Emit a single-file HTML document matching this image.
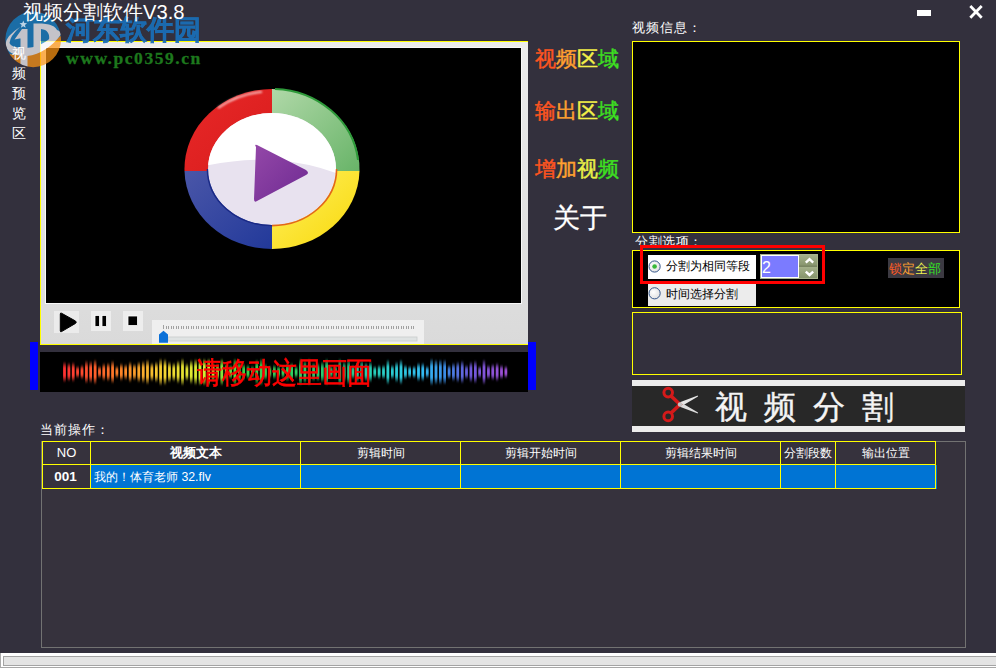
<!DOCTYPE html>
<html><head><meta charset="utf-8">
<style>
*{margin:0;padding:0;box-sizing:border-box}
html,body{width:996px;height:668px;overflow:hidden}
body{background:#33303d;font-family:"Liberation Sans",sans-serif;position:relative;color:#fff}
.a{position:absolute}
.t{position:absolute;white-space:nowrap;line-height:1}
</style></head><body>

<!-- title -->

<!-- window buttons -->
<div class="a" style="left:917px;top:10px;width:14px;height:6px;background:#fff"></div>
<svg class="a" style="left:965.5px;top:1.5px" width="20" height="20" viewBox="0 0 20 20"><path d="M4.3 4 L15.7 15.8 M15.7 4 L4.3 15.8" stroke="#fff" stroke-width="2.8"/></svg>

<!-- player frame -->
<div class="a" id="player" style="left:40px;top:41px;width:488px;height:304px;background:linear-gradient(#ececec,#dadada);border-top:1px solid #ff0;border-left:1px solid #ff0;border-bottom:1px solid #ff0"></div>
<div class="a" style="left:45px;top:47px;width:477px;height:257px;background:#f8f8f8"></div>
<div class="a" id="video" style="left:46px;top:48px;width:475px;height:255px;background:#000"></div>
<svg class="a" style="left:0;top:0" width="996" height="400" viewBox="0 0 996 400">
 <defs>
  <linearGradient id="gG" x1="0" y1="0" x2="1" y2="1"><stop offset="0" stop-color="#b0d8a8"/><stop offset="1" stop-color="#68b468"/></linearGradient>
  <linearGradient id="gR" x1="0" y1="0" x2="1" y2="1"><stop offset="0" stop-color="#e82828"/><stop offset="1" stop-color="#d81c1c"/></linearGradient>
  <linearGradient id="gB" x1="0" y1="0" x2="1" y2="1"><stop offset="0" stop-color="#4a56a8"/><stop offset="1" stop-color="#22399a"/></linearGradient>
  <linearGradient id="gY" x1="0" y1="0" x2="1" y2="1"><stop offset="0" stop-color="#fff060"/><stop offset="1" stop-color="#f8d808"/></linearGradient>
  <linearGradient id="gW" x1="0" y1="0" x2="0" y2="1"><stop offset="0" stop-color="#ffffff"/><stop offset="0.45" stop-color="#fbfafd"/><stop offset="0.5" stop-color="#e8e2f0"/><stop offset="1" stop-color="#e4dcec"/></linearGradient>
  <linearGradient id="gP" x1="0" y1="0" x2="1" y2="1"><stop offset="0" stop-color="#9448a8"/><stop offset="1" stop-color="#6e2a92"/></linearGradient>
  <filter id="hl"><feGaussianBlur stdDeviation="0.8"/></filter>
  <filter id="bl" x="-50%" y="-20%" width="200%" height="140%"><feGaussianBlur stdDeviation="0.7 1.8"/></filter>
 </defs>
 <path d="M272 171 L184.5 171 A87.5 80 0 0 1 272 89 Z" fill="url(#gR)"/>
 <path d="M272 171 L272 89 A87.5 80 0 0 1 359.5 171 Z" fill="url(#gG)"/>
 <path d="M272 171 L359.5 171 A87.5 80 0 0 1 272 249 Z" fill="url(#gY)"/>
 <path d="M272 171 L272 249 A87.5 80 0 0 1 184.5 171 Z" fill="url(#gB)"/>
 <path d="M358 160 A87 80 0 0 0 275 89" stroke="#2e9a3a" stroke-width="2" fill="none"/>
 <path d="M218 108 A87 79.5 0 0 1 262 91.8" stroke="#fff" stroke-width="1.8" fill="none" opacity="0.8" filter="url(#hl)"/>
 
 <clipPath id="ie"><ellipse cx="272" cy="169" rx="64" ry="56"/></clipPath>
 <ellipse cx="272" cy="169" rx="64" ry="56" fill="#e8e2ef"/>
 <path clip-path="url(#ie)" d="M200 167 Q240 158 275 160 Q312 163 344 176 L344 100 L200 100 Z" fill="#ffffff"/>
 <path d="M272 225.6 A64.6 56.6 0 0 0 336.6 169" stroke="#e2661c" stroke-width="1.6" fill="none"/>
 <path d="M207.4 169 A64.6 56.6 0 0 0 272 225.6" stroke="#1a2a86" stroke-width="1.4" fill="none"/>
 <path d="M256 147 Q254 144 257 145 L306 170 Q310 173 306 175 L257 201 Q254 203 254 199 Z" fill="url(#gP)"/>
 <!-- controls -->
 <rect x="54" y="311" width="25" height="22" fill="#ebebeb"/>
 <path d="M61.5 313.2 L75.5 321 Q77 322.2 75.5 323.4 L61.5 331.6 Q60.3 332.2 60.3 330.8 L60.3 314 Q60.3 312.6 61.5 313.2 Z" fill="#000" stroke="#000" stroke-width="1" stroke-linejoin="round"/>
 <rect x="91" y="311" width="20" height="20" fill="#ededed"/>
 <rect x="95" y="315.5" width="4.5" height="11" fill="#000" stroke="#fff" stroke-width="0.8"/>
 <rect x="102" y="315.5" width="4.5" height="11" fill="#000" stroke="#fff" stroke-width="0.8"/>
 <rect x="123" y="311" width="20" height="20" fill="#ededed"/>
 <rect x="128" y="316" width="9.5" height="9.5" fill="#000" stroke="#fff" stroke-width="0.8"/>
 <rect x="152" y="320" width="272" height="24" fill="#efefef"/>
 <rect x="168" y="337" width="249" height="4" fill="#dfe3e3" stroke="#c8cccc" stroke-width="0.8"/>
 <path id="ticks" d="M163.5 325 V329 M166.5 326 V329 M168.5 326 V329 M171.5 326 V329 M173.5 326 V329 M176.5 326 V329 M178.5 326 V329 M181.5 326 V329 M183.5 326 V329 M186.5 326 V329 M188.5 326 V329 M191.5 326 V329 M193.5 326 V329 M196.5 326 V329 M198.5 326 V329 M201.5 326 V329 M203.5 326 V329 M206.5 326 V329 M208.5 326 V329 M211.5 326 V329 M213.5 326 V329 M216.5 326 V329 M218.5 326 V329 M221.5 326 V329 M223.5 326 V329 M226.5 326 V329 M228.5 326 V329 M231.5 326 V329 M233.5 326 V329 M236.5 326 V329 M238.5 326 V329 M241.5 326 V329 M243.5 326 V329 M246.5 326 V329 M248.5 326 V329 M251.5 326 V329 M253.5 326 V329 M256.5 326 V329 M258.5 326 V329 M261.5 326 V329 M263.5 326 V329 M266.5 326 V329 M268.5 326 V329 M271.5 326 V329 M273.5 326 V329 M276.5 326 V329 M278.5 326 V329 M281.5 326 V329 M283.5 326 V329 M286.5 326 V329 M288.5 326 V329 M291.5 326 V329 M293.5 326 V329 M296.5 326 V329 M298.5 326 V329 M301.5 326 V329 M303.5 326 V329 M306.5 326 V329 M308.5 326 V329 M311.5 326 V329 M313.5 326 V329 M316.5 326 V329 M318.5 326 V329 M321.5 326 V329 M323.5 326 V329 M326.5 326 V329 M328.5 326 V329 M331.5 326 V329 M333.5 326 V329 M336.5 326 V329 M338.5 326 V329 M341.5 326 V329 M343.5 326 V329 M346.5 326 V329 M348.5 326 V329 M351.5 326 V329 M353.5 326 V329 M356.5 326 V329 M358.5 326 V329 M361.5 326 V329 M363.5 326 V329 M366.5 326 V329 M368.5 326 V329 M371.5 326 V329 M373.5 326 V329 M376.5 326 V329 M378.5 326 V329 M381.5 326 V329 M383.5 326 V329 M386.5 326 V329 M388.5 326 V329 M391.5 326 V329 M393.5 326 V329 M396.5 326 V329 M398.5 326 V329 M401.5 326 V329 M403.5 326 V329 M406.5 326 V329 M408.5 326 V329 M411.5 326 V329 M413.5 326 V329" stroke="#a0a0a0" stroke-width="1"/>
 <path d="M159 334.5 L163.5 330.7 L168 334.5 L168 342.8 L159 342.8 Z" fill="#0a70d8"/>
 <!-- waveform -->
 <rect x="40" y="352" width="488" height="40" fill="#000"/>
 <g filter="url(#bl)">
<rect x="63.2" y="363.0" width="2.6" height="18" fill="#ff3231" opacity="0.55"/><rect x="63.2" y="366.2" width="2.6" height="11.5" fill="#ff3231"/>
<rect x="67.6" y="364.0" width="2.6" height="16" fill="#ff3831" opacity="0.55"/><rect x="67.6" y="366.9" width="2.6" height="10.2" fill="#ff3831"/>
<rect x="71.9" y="363.5" width="2.6" height="17" fill="#ff3f30" opacity="0.55"/><rect x="71.9" y="366.6" width="2.6" height="10.9" fill="#ff3f30"/>
<rect x="76.3" y="367.0" width="2.6" height="10" fill="#ff452f" opacity="0.55"/><rect x="76.3" y="368.8" width="2.6" height="6.4" fill="#ff452f"/>
<rect x="80.7" y="366.0" width="2.6" height="12" fill="#ff4b2e" opacity="0.55"/><rect x="80.7" y="368.2" width="2.6" height="7.7" fill="#ff4b2e"/>
<rect x="85.1" y="362.0" width="2.6" height="20" fill="#ff512e" opacity="0.55"/><rect x="85.1" y="365.6" width="2.6" height="12.8" fill="#ff512e"/>
<rect x="89.4" y="362.5" width="2.6" height="19" fill="#ff582d" opacity="0.55"/><rect x="89.4" y="365.9" width="2.6" height="12.2" fill="#ff582d"/>
<rect x="93.8" y="361.0" width="2.6" height="22" fill="#ff5e2c" opacity="0.55"/><rect x="93.8" y="365.0" width="2.6" height="14.1" fill="#ff5e2c"/>
<rect x="98.2" y="367.0" width="2.6" height="10" fill="#ff642b" opacity="0.55"/><rect x="98.2" y="368.8" width="2.6" height="6.4" fill="#ff642b"/>
<rect x="102.5" y="364.5" width="2.6" height="15" fill="#ff6a2a" opacity="0.55"/><rect x="102.5" y="367.2" width="2.6" height="9.6" fill="#ff6a2a"/>
<rect x="106.9" y="364.0" width="2.6" height="16" fill="#ff712a" opacity="0.55"/><rect x="106.9" y="366.9" width="2.6" height="10.2" fill="#ff712a"/>
<rect x="111.3" y="362.0" width="2.6" height="20" fill="#ff7729" opacity="0.55"/><rect x="111.3" y="365.6" width="2.6" height="12.8" fill="#ff7729"/>
<rect x="115.6" y="367.0" width="2.6" height="10" fill="#ff7d28" opacity="0.55"/><rect x="115.6" y="368.8" width="2.6" height="6.4" fill="#ff7d28"/>
<rect x="120.0" y="364.5" width="2.6" height="15" fill="#fe8428" opacity="0.55"/><rect x="120.0" y="367.2" width="2.6" height="9.6" fill="#fe8428"/>
<rect x="124.4" y="365.5" width="2.6" height="13" fill="#fd8c29" opacity="0.55"/><rect x="124.4" y="367.8" width="2.6" height="8.3" fill="#fd8c29"/>
<rect x="128.8" y="363.0" width="2.6" height="18" fill="#fc942a" opacity="0.55"/><rect x="128.8" y="366.2" width="2.6" height="11.5" fill="#fc942a"/>
<rect x="133.1" y="365.0" width="2.6" height="14" fill="#fb9d2b" opacity="0.55"/><rect x="133.1" y="367.5" width="2.6" height="9.0" fill="#fb9d2b"/>
<rect x="137.5" y="363.0" width="2.6" height="18" fill="#faa52c" opacity="0.55"/><rect x="137.5" y="366.2" width="2.6" height="11.5" fill="#faa52c"/>
<rect x="141.9" y="362.5" width="2.6" height="19" fill="#f9ad2d" opacity="0.55"/><rect x="141.9" y="365.9" width="2.6" height="12.2" fill="#f9ad2d"/>
<rect x="146.2" y="361.0" width="2.6" height="22" fill="#f8b62e" opacity="0.55"/><rect x="146.2" y="365.0" width="2.6" height="14.1" fill="#f8b62e"/>
<rect x="150.6" y="364.0" width="2.6" height="16" fill="#f7be2f" opacity="0.55"/><rect x="150.6" y="366.9" width="2.6" height="10.2" fill="#f7be2f"/>
<rect x="155.0" y="363.0" width="2.6" height="18" fill="#f6c630" opacity="0.55"/><rect x="155.0" y="366.2" width="2.6" height="11.5" fill="#f6c630"/>
<rect x="159.3" y="360.0" width="2.6" height="24" fill="#f5ce31" opacity="0.55"/><rect x="159.3" y="364.3" width="2.6" height="15.4" fill="#f5ce31"/>
<rect x="163.7" y="360.5" width="2.6" height="23" fill="#f4d732" opacity="0.55"/><rect x="163.7" y="364.6" width="2.6" height="14.7" fill="#f4d732"/>
<rect x="168.1" y="363.0" width="2.6" height="18" fill="#f1d932" opacity="0.55"/><rect x="168.1" y="366.2" width="2.6" height="11.5" fill="#f1d932"/>
<rect x="172.5" y="364.0" width="2.6" height="16" fill="#eddc32" opacity="0.55"/><rect x="172.5" y="366.9" width="2.6" height="10.2" fill="#eddc32"/>
<rect x="176.8" y="362.0" width="2.6" height="20" fill="#e9df32" opacity="0.55"/><rect x="176.8" y="365.6" width="2.6" height="12.8" fill="#e9df32"/>
<rect x="181.2" y="360.0" width="2.6" height="24" fill="#e5e132" opacity="0.55"/><rect x="181.2" y="364.3" width="2.6" height="15.4" fill="#e5e132"/>
<rect x="185.6" y="364.5" width="2.6" height="15" fill="#e1e432" opacity="0.55"/><rect x="185.6" y="367.2" width="2.6" height="9.6" fill="#e1e432"/>
<rect x="189.9" y="361.5" width="2.6" height="21" fill="#dee732" opacity="0.55"/><rect x="189.9" y="365.3" width="2.6" height="13.4" fill="#dee732"/>
<rect x="194.3" y="360.5" width="2.6" height="23" fill="#daea32" opacity="0.55"/><rect x="194.3" y="364.6" width="2.6" height="14.7" fill="#daea32"/>
<rect x="198.7" y="360.0" width="2.6" height="24" fill="#d6ec32" opacity="0.55"/><rect x="198.7" y="364.3" width="2.6" height="15.4" fill="#d6ec32"/>
<rect x="203.0" y="360.0" width="2.6" height="24" fill="#d2ef32" opacity="0.55"/><rect x="203.0" y="364.3" width="2.6" height="15.4" fill="#d2ef32"/>
<rect x="207.4" y="360.0" width="2.6" height="24" fill="#c2ed34" opacity="0.55"/><rect x="207.4" y="364.3" width="2.6" height="15.4" fill="#c2ed34"/>
<rect x="211.8" y="364.0" width="2.6" height="16" fill="#afea36" opacity="0.55"/><rect x="211.8" y="366.9" width="2.6" height="10.2" fill="#afea36"/>
<rect x="216.2" y="365.0" width="2.6" height="14" fill="#9ce739" opacity="0.55"/><rect x="216.2" y="367.5" width="2.6" height="9.0" fill="#9ce739"/>
<rect x="220.5" y="360.0" width="2.6" height="24" fill="#89e33b" opacity="0.55"/><rect x="220.5" y="364.3" width="2.6" height="15.4" fill="#89e33b"/>
<rect x="224.9" y="365.0" width="2.6" height="14" fill="#77e03e" opacity="0.55"/><rect x="224.9" y="367.5" width="2.6" height="9.0" fill="#77e03e"/>
<rect x="229.3" y="366.0" width="2.6" height="12" fill="#64dd40" opacity="0.55"/><rect x="229.3" y="368.2" width="2.6" height="7.7" fill="#64dd40"/>
<rect x="233.6" y="360.0" width="2.6" height="24" fill="#51da43" opacity="0.55"/><rect x="233.6" y="364.3" width="2.6" height="15.4" fill="#51da43"/>
<rect x="238.0" y="363.0" width="2.6" height="18" fill="#3ed745" opacity="0.55"/><rect x="238.0" y="366.2" width="2.6" height="11.5" fill="#3ed745"/>
<rect x="242.4" y="365.0" width="2.6" height="14" fill="#3bd647" opacity="0.55"/><rect x="242.4" y="367.5" width="2.6" height="9.0" fill="#3bd647"/>
<rect x="246.7" y="366.0" width="2.6" height="12" fill="#3ad54a" opacity="0.55"/><rect x="246.7" y="368.2" width="2.6" height="7.7" fill="#3ad54a"/>
<rect x="251.1" y="367.0" width="2.6" height="10" fill="#39d54c" opacity="0.55"/><rect x="251.1" y="368.8" width="2.6" height="6.4" fill="#39d54c"/>
<rect x="255.5" y="361.0" width="2.6" height="22" fill="#38d44e" opacity="0.55"/><rect x="255.5" y="365.0" width="2.6" height="14.1" fill="#38d44e"/>
<rect x="259.9" y="360.0" width="2.6" height="24" fill="#37d350" opacity="0.55"/><rect x="259.9" y="364.3" width="2.6" height="15.4" fill="#37d350"/>
<rect x="264.2" y="365.0" width="2.6" height="14" fill="#36d352" opacity="0.55"/><rect x="264.2" y="367.5" width="2.6" height="9.0" fill="#36d352"/>
<rect x="268.6" y="367.0" width="2.6" height="10" fill="#36d254" opacity="0.55"/><rect x="268.6" y="368.8" width="2.6" height="6.4" fill="#36d254"/>
<rect x="273.0" y="366.0" width="2.6" height="12" fill="#35d157" opacity="0.55"/><rect x="273.0" y="368.2" width="2.6" height="7.7" fill="#35d157"/>
<rect x="277.3" y="367.0" width="2.6" height="10" fill="#34d159" opacity="0.55"/><rect x="277.3" y="368.8" width="2.6" height="6.4" fill="#34d159"/>
<rect x="281.7" y="367.0" width="2.6" height="10" fill="#33d05b" opacity="0.55"/><rect x="281.7" y="368.8" width="2.6" height="6.4" fill="#33d05b"/>
<rect x="286.1" y="364.0" width="2.6" height="16" fill="#32cf5d" opacity="0.55"/><rect x="286.1" y="366.9" width="2.6" height="10.2" fill="#32cf5d"/>
<rect x="290.4" y="364.0" width="2.6" height="16" fill="#31cf5f" opacity="0.55"/><rect x="290.4" y="366.9" width="2.6" height="10.2" fill="#31cf5f"/>
<rect x="294.8" y="367.0" width="2.6" height="10" fill="#30ce62" opacity="0.55"/><rect x="294.8" y="368.8" width="2.6" height="6.4" fill="#30ce62"/>
<rect x="299.2" y="360.0" width="2.6" height="24" fill="#2fcd64" opacity="0.55"/><rect x="299.2" y="364.3" width="2.6" height="15.4" fill="#2fcd64"/>
<rect x="303.6" y="362.0" width="2.6" height="20" fill="#2fcd66" opacity="0.55"/><rect x="303.6" y="365.6" width="2.6" height="12.8" fill="#2fcd66"/>
<rect x="307.9" y="360.0" width="2.6" height="24" fill="#2ecc68" opacity="0.55"/><rect x="307.9" y="364.3" width="2.6" height="15.4" fill="#2ecc68"/>
<rect x="312.3" y="364.0" width="2.6" height="16" fill="#2dcb6a" opacity="0.55"/><rect x="312.3" y="366.9" width="2.6" height="10.2" fill="#2dcb6a"/>
<rect x="316.7" y="364.0" width="2.6" height="16" fill="#2ccb6c" opacity="0.55"/><rect x="316.7" y="366.9" width="2.6" height="10.2" fill="#2ccb6c"/>
<rect x="321.0" y="363.0" width="2.6" height="18" fill="#2bca6f" opacity="0.55"/><rect x="321.0" y="366.2" width="2.6" height="11.5" fill="#2bca6f"/>
<rect x="325.4" y="360.0" width="2.6" height="24" fill="#2ac971" opacity="0.55"/><rect x="325.4" y="364.3" width="2.6" height="15.4" fill="#2ac971"/>
<rect x="329.8" y="367.0" width="2.6" height="10" fill="#29c973" opacity="0.55"/><rect x="329.8" y="368.8" width="2.6" height="6.4" fill="#29c973"/>
<rect x="334.1" y="366.0" width="2.6" height="12" fill="#28c875" opacity="0.55"/><rect x="334.1" y="368.2" width="2.6" height="7.7" fill="#28c875"/>
<rect x="338.5" y="360.0" width="2.6" height="24" fill="#28c877" opacity="0.55"/><rect x="338.5" y="364.3" width="2.6" height="15.4" fill="#28c877"/>
<rect x="342.9" y="363.0" width="2.6" height="18" fill="#28c980" opacity="0.55"/><rect x="342.9" y="366.2" width="2.6" height="11.5" fill="#28c980"/>
<rect x="347.3" y="361.0" width="2.6" height="22" fill="#28ca89" opacity="0.55"/><rect x="347.3" y="365.0" width="2.6" height="14.1" fill="#28ca89"/>
<rect x="351.6" y="366.0" width="2.6" height="12" fill="#28cb91" opacity="0.55"/><rect x="351.6" y="368.2" width="2.6" height="7.7" fill="#28cb91"/>
<rect x="356.0" y="363.0" width="2.6" height="18" fill="#28cc9a" opacity="0.55"/><rect x="356.0" y="366.2" width="2.6" height="11.5" fill="#28cc9a"/>
<rect x="360.4" y="362.0" width="2.6" height="20" fill="#28cea3" opacity="0.55"/><rect x="360.4" y="365.6" width="2.6" height="12.8" fill="#28cea3"/>
<rect x="364.7" y="364.0" width="2.6" height="16" fill="#28cfac" opacity="0.55"/><rect x="364.7" y="366.9" width="2.6" height="10.2" fill="#28cfac"/>
<rect x="369.1" y="363.0" width="2.6" height="18" fill="#28d0b4" opacity="0.55"/><rect x="369.1" y="366.2" width="2.6" height="11.5" fill="#28d0b4"/>
<rect x="373.5" y="367.0" width="2.6" height="10" fill="#28d1bd" opacity="0.55"/><rect x="373.5" y="368.8" width="2.6" height="6.4" fill="#28d1bd"/>
<rect x="377.8" y="366.0" width="2.6" height="12" fill="#28d0c3" opacity="0.55"/><rect x="377.8" y="368.2" width="2.6" height="7.7" fill="#28d0c3"/>
<rect x="382.2" y="366.0" width="2.6" height="12" fill="#29cfc8" opacity="0.55"/><rect x="382.2" y="368.2" width="2.6" height="7.7" fill="#29cfc8"/>
<rect x="386.6" y="361.0" width="2.6" height="22" fill="#2acdcd" opacity="0.55"/><rect x="386.6" y="365.0" width="2.6" height="14.1" fill="#2acdcd"/>
<rect x="391.0" y="366.0" width="2.6" height="12" fill="#2bccd3" opacity="0.55"/><rect x="391.0" y="368.2" width="2.6" height="7.7" fill="#2bccd3"/>
<rect x="395.3" y="363.0" width="2.6" height="18" fill="#2ccad8" opacity="0.55"/><rect x="395.3" y="366.2" width="2.6" height="11.5" fill="#2ccad8"/>
<rect x="399.7" y="361.0" width="2.6" height="22" fill="#2dc9dd" opacity="0.55"/><rect x="399.7" y="365.0" width="2.6" height="14.1" fill="#2dc9dd"/>
<rect x="404.1" y="366.0" width="2.6" height="12" fill="#2ec7e3" opacity="0.55"/><rect x="404.1" y="368.2" width="2.6" height="7.7" fill="#2ec7e3"/>
<rect x="408.4" y="367.0" width="2.6" height="10" fill="#2fc6e8" opacity="0.55"/><rect x="408.4" y="368.8" width="2.6" height="6.4" fill="#2fc6e8"/>
<rect x="412.8" y="367.0" width="2.6" height="10" fill="#30c4ed" opacity="0.55"/><rect x="412.8" y="368.8" width="2.6" height="6.4" fill="#30c4ed"/>
<rect x="417.2" y="364.0" width="2.6" height="16" fill="#31c3f3" opacity="0.55"/><rect x="417.2" y="366.9" width="2.6" height="10.2" fill="#31c3f3"/>
<rect x="421.5" y="364.0" width="2.6" height="16" fill="#33bcf3" opacity="0.55"/><rect x="421.5" y="366.9" width="2.6" height="10.2" fill="#33bcf3"/>
<rect x="425.9" y="367.0" width="2.6" height="10" fill="#34b3f0" opacity="0.55"/><rect x="425.9" y="368.8" width="2.6" height="6.4" fill="#34b3f0"/>
<rect x="430.3" y="360.0" width="2.6" height="24" fill="#36a9ee" opacity="0.55"/><rect x="430.3" y="364.3" width="2.6" height="15.4" fill="#36a9ee"/>
<rect x="434.7" y="361.0" width="2.6" height="22" fill="#389feb" opacity="0.55"/><rect x="434.7" y="365.0" width="2.6" height="14.1" fill="#389feb"/>
<rect x="439.0" y="361.0" width="2.6" height="22" fill="#3a96e8" opacity="0.55"/><rect x="439.0" y="365.0" width="2.6" height="14.1" fill="#3a96e8"/>
<rect x="443.4" y="361.0" width="2.6" height="22" fill="#3b8ce6" opacity="0.55"/><rect x="443.4" y="365.0" width="2.6" height="14.1" fill="#3b8ce6"/>
<rect x="447.8" y="366.0" width="2.6" height="12" fill="#4483e4" opacity="0.55"/><rect x="447.8" y="368.2" width="2.6" height="7.7" fill="#4483e4"/>
<rect x="452.1" y="364.0" width="2.6" height="16" fill="#4c7be2" opacity="0.55"/><rect x="452.1" y="366.9" width="2.6" height="10.2" fill="#4c7be2"/>
<rect x="456.5" y="363.0" width="2.6" height="18" fill="#5572e0" opacity="0.55"/><rect x="456.5" y="366.2" width="2.6" height="11.5" fill="#5572e0"/>
<rect x="460.9" y="362.0" width="2.6" height="20" fill="#5e69df" opacity="0.55"/><rect x="460.9" y="365.6" width="2.6" height="12.8" fill="#5e69df"/>
<rect x="465.2" y="366.0" width="2.6" height="12" fill="#6760dd" opacity="0.55"/><rect x="465.2" y="368.2" width="2.6" height="7.7" fill="#6760dd"/>
<rect x="469.6" y="363.0" width="2.6" height="18" fill="#6f59db" opacity="0.55"/><rect x="469.6" y="366.2" width="2.6" height="11.5" fill="#6f59db"/>
<rect x="474.0" y="362.0" width="2.6" height="20" fill="#7558db" opacity="0.55"/><rect x="474.0" y="365.6" width="2.6" height="12.8" fill="#7558db"/>
<rect x="478.4" y="367.0" width="2.6" height="10" fill="#7b57da" opacity="0.55"/><rect x="478.4" y="368.8" width="2.6" height="6.4" fill="#7b57da"/>
<rect x="482.7" y="361.0" width="2.6" height="22" fill="#8255d9" opacity="0.55"/><rect x="482.7" y="365.0" width="2.6" height="14.1" fill="#8255d9"/>
<rect x="487.1" y="366.0" width="2.6" height="12" fill="#8854d9" opacity="0.55"/><rect x="487.1" y="368.2" width="2.6" height="7.7" fill="#8854d9"/>
<rect x="491.5" y="365.0" width="2.6" height="14" fill="#8e53d8" opacity="0.55"/><rect x="491.5" y="367.5" width="2.6" height="9.0" fill="#8e53d8"/>
<rect x="495.8" y="364.0" width="2.6" height="16" fill="#9452d8" opacity="0.55"/><rect x="495.8" y="366.9" width="2.6" height="10.2" fill="#9452d8"/>
<rect x="500.2" y="366.0" width="2.6" height="12" fill="#9b50d7" opacity="0.55"/><rect x="500.2" y="368.2" width="2.6" height="7.7" fill="#9b50d7"/>
<rect x="504.6" y="367.0" width="2.6" height="10" fill="#a050d7" opacity="0.55"/><rect x="504.6" y="368.8" width="2.6" height="6.4" fill="#a050d7"/>
 </g>
</svg>
<div class="a" style="left:30px;top:342px;width:8px;height:48px;background:#0000ff"></div>
<div class="a" style="left:528px;top:342px;width:8px;height:48px;background:#0000ff"></div>
<div class="t" style="left:197px;top:358px;font-size:25px;color:#ff0000;-webkit-text-stroke:0.5px #ff0000;transform:scaleY(1.2);transform-origin:0 0">请移动这里画面</div>

<!-- right menu -->
<div class="t" style="left:535px;top:48px;font-size:21px;-webkit-text-stroke:0.45px currentColor"><span style="color:#ff5520;-webkit-text-stroke:0.45px #ff5520">视</span><span style="color:#ffa030;-webkit-text-stroke:0.45px #ffa030">频</span><span style="color:#f4f048;-webkit-text-stroke:0.45px #f4f048">区</span><span style="color:#3ee020;-webkit-text-stroke:0.45px #3ee020">域</span></div>
<div class="t" style="left:535px;top:100px;font-size:21px;-webkit-text-stroke:0.45px currentColor"><span style="color:#ff5520;-webkit-text-stroke:0.45px #ff5520">输</span><span style="color:#ffa030;-webkit-text-stroke:0.45px #ffa030">出</span><span style="color:#f4f048;-webkit-text-stroke:0.45px #f4f048">区</span><span style="color:#3ee020;-webkit-text-stroke:0.45px #3ee020">域</span></div>
<div class="t" style="left:535px;top:158px;font-size:21px;-webkit-text-stroke:0.45px currentColor"><span style="color:#ff5520;-webkit-text-stroke:0.45px #ff5520">增</span><span style="color:#ffa030;-webkit-text-stroke:0.45px #ffa030">加</span><span style="color:#eaf048;-webkit-text-stroke:0.45px #eaf048">视</span><span style="color:#3ee020;-webkit-text-stroke:0.45px #3ee020">频</span></div>
<div class="t" style="left:553px;top:205px;font-size:27px;-webkit-text-stroke:0.3px #fff">关于</div>

<!-- info -->
<div class="t" style="left:632px;top:21px;font-size:13px;letter-spacing:1.1px">视频信息：</div>
<div class="a" style="left:632px;top:41px;width:328px;height:192px;background:#000;border:1px solid #ff0"></div>

<!-- options -->
<div class="a" style="left:632px;top:230px;width:200px;height:15px;overflow:hidden"><div class="t" style="left:3px;top:5px;font-size:13px;letter-spacing:0.6px">分割选项：</div></div>
<div class="a" style="left:632px;top:250px;width:328px;height:58px;background:#000;border:1px solid #ff0"></div>
<div class="a" style="left:648px;top:255px;width:108px;height:24px;background:#fff"></div>
<div class="a" style="left:648px;top:284px;width:108px;height:22px;background:#ececec"></div>
<svg class="a" style="left:640px;top:255px" width="30" height="50" viewBox="640 255 30 50">
 <defs><radialGradient id="rg" cx="0.4" cy="0.4" r="0.7"><stop offset="0" stop-color="#fff"/><stop offset="1" stop-color="#ddd"/></radialGradient></defs>
 <circle cx="654.6" cy="266.5" r="5.6" fill="url(#rg)" stroke="#33558a" stroke-width="1"/>
 <circle cx="654.6" cy="266.5" r="2.3" fill="#38b838"/>
 <circle cx="654.6" cy="293.3" r="5.6" fill="url(#rg)" stroke="#33558a" stroke-width="1"/>
</svg>
<div class="t" style="left:666px;top:260px;font-size:12px;color:#000">分割为相同等段</div>
<div class="t" style="left:666px;top:288px;font-size:12px;color:#000">时间选择分割</div>
<div class="a" style="left:760px;top:254px;width:58px;height:25px;background:#8c9a72;border:1px solid #a8b48c"></div>
<div class="a" style="left:761px;top:255px;width:38px;height:23px;background:#7b7bff;border:1px solid #fff"></div>
<div class="t" style="left:762px;top:259.5px;font-size:16px;color:#fff;font-weight:300">2</div>
<svg class="a" style="left:799px;top:255px" width="19" height="23" viewBox="0 0 19 23">
 <defs><linearGradient id="sp" x1="0" y1="0" x2="0" y2="1"><stop offset="0" stop-color="#a4b08a"/><stop offset="1" stop-color="#86946c"/></linearGradient></defs>
 <rect x="0" y="0" width="18" height="11" fill="url(#sp)"/><rect x="0" y="12" width="18" height="11" fill="url(#sp)"/>
 <rect x="0" y="10.5" width="18" height="1.5" fill="#7a8662"/>
 <path d="M6.8 7.6 L10.5 4.2 L14.2 7.6" stroke="#fff" stroke-width="2.4" fill="none"/>
 <path d="M6.8 16.6 L10.5 20 L14.2 16.6" stroke="#fff" stroke-width="2.4" fill="none"/>
</svg>
<div class="a" style="left:640px;top:245px;width:185px;height:39px;border:3px solid #f00"></div>
<div class="a" style="left:888px;top:258px;width:56px;height:20px;background:#3c3a42"></div>
<div class="t" style="left:889px;top:262px;font-size:13.3px"><span style="color:#ff5a24">锁</span><span style="color:#ffa030">定</span><span style="color:#eef050">全</span><span style="color:#34e024">部</span></div>
<div class="a" style="left:632px;top:312px;width:330px;height:63px;border:1px solid #ff0"></div>

<!-- split button -->
<div class="a" style="left:632px;top:380px;width:333px;height:52px;background:#ececec"></div>
<div class="a" style="left:632px;top:386px;width:333px;height:40px;background:#282828"></div>
<svg class="a" style="left:660px;top:385px" width="40" height="40" viewBox="0 0 40 40">
 <path d="M18.5 17.8 L37.8 10.4 L38 11.6 L21 21.5 Z" fill="#e6e6e6"/>
 <path d="M18.5 21.2 L37.8 28.6 L38 27.4 L21 17.5 Z" fill="#dcdcdc"/>
 <path d="M10.5 10.5 L20 19.5 L10.5 28.5" stroke="#d41a1a" stroke-width="3.6" fill="none"/>
 <circle cx="8.2" cy="7.6" r="4.3" fill="none" stroke="#d41a1a" stroke-width="3"/>
 <circle cx="8.2" cy="31.4" r="4.3" fill="none" stroke="#d41a1a" stroke-width="3"/>
 <circle cx="20" cy="19.5" r="2.2" fill="#c4c4c4"/>
</svg>
<div class="t" style="left:715px;top:391px;font-size:32px;color:#f4f4f4;-webkit-text-stroke:0.4px #f4f4f4;letter-spacing:17px">视频分割</div>

<!-- grid -->
<div class="t" style="left:40px;top:423px;font-size:13px;letter-spacing:1px">当前操作：</div>
<div class="a" style="left:41px;top:441px;width:925px;height:207px;background:#36323d;border:1px solid #727272"></div>
<div class="a" style="left:91px;top:465px;width:846px;height:24px;background:#0074d4"></div>
<div class="a" style="left:42px;top:441px;width:894px;height:1px;background:#ff0"></div>
<div class="a" style="left:42px;top:464px;width:894px;height:1px;background:#ff0"></div>
<div class="a" style="left:42px;top:488px;width:894px;height:1px;background:#ff0"></div>
<div class="a" style="left:42px;top:441px;width:1px;height:48px;background:#ff0"></div>
<div class="a" style="left:90px;top:441px;width:1px;height:48px;background:#ff0"></div>
<div class="a" style="left:300px;top:441px;width:1px;height:48px;background:#ff0"></div>
<div class="a" style="left:460px;top:441px;width:1px;height:48px;background:#ff0"></div>
<div class="a" style="left:620px;top:441px;width:1px;height:48px;background:#ff0"></div>
<div class="a" style="left:780px;top:441px;width:1px;height:48px;background:#ff0"></div>
<div class="a" style="left:835px;top:441px;width:1px;height:48px;background:#ff0"></div>
<div class="a" style="left:935px;top:441px;width:1px;height:48px;background:#ff0"></div>
<div class="t" style="left:43px;top:446px;width:47px;text-align:center;font-size:13px;font-weight:normal">NO</div>
<div class="t" style="left:91px;top:446px;width:209px;text-align:center;font-size:13px;font-weight:bold">视频文本</div>
<div class="t" style="left:301px;top:446.5px;width:159px;text-align:center;font-size:12px;font-weight:normal">剪辑时间</div>
<div class="t" style="left:461px;top:446.5px;width:159px;text-align:center;font-size:12px;font-weight:normal">剪辑开始时间</div>
<div class="t" style="left:621px;top:446.5px;width:159px;text-align:center;font-size:12px;font-weight:normal">剪辑结果时间</div>
<div class="t" style="left:781px;top:446.5px;width:54px;text-align:center;font-size:12px;font-weight:normal">分割段数</div>
<div class="t" style="left:836px;top:446.5px;width:99px;text-align:center;font-size:12px;font-weight:normal">输出位置</div>
<div class="t" style="left:42px;top:469.5px;width:47px;text-align:center;font-size:13.5px;font-weight:bold">001</div>
<div class="t" style="left:94px;top:470.5px;font-size:12.3px">我的！体育老师 32.flv</div>

<!-- bottom bar -->
<div class="a" style="left:0;top:653px;width:996px;height:15px;background:#fff;border-left:1px solid #aaa;border-bottom:1px solid #a8a8a8"></div>
<div class="a" style="left:3px;top:656px;width:993px;height:10px;background:#e4e4e4;border:1px solid #a4a4a4;border-right:none"></div>

<!-- watermark -->
<svg class="a" style="left:0;top:0" width="70" height="75" viewBox="0 0 70 75">
 <defs><clipPath id="cc"><circle cx="33.2" cy="39.4" r="27.8"/></clipPath></defs>
 <g clip-path="url(#cc)" opacity="0.72">
  <rect x="0" y="0" width="70" height="75" fill="#1386cf"/>
  <path d="M0 52 Q20 58 40 50 Q55 42 70 28 L70 75 L0 75 Z" fill="#ff9614"/>
  <path d="M20.5 38 L22 29 L27.5 29 L27.5 72 L20.5 72 Z M14.5 39.5 L22 29 L22 38 Z" fill="#fcfcff"/>
  <path d="M33.5 23.5 L42 23.5 Q58 24.5 57.5 33.5 Q55.5 39.5 49 40.5 Q50.5 30 41 29 L41 48 L33.5 48 Z" fill="#fcfcff"/>
  <path d="M20 27 Q6 36 5.5 44 Q7 56.5 27 56 Q48 53 62 33 L57.5 30 Q46 46 28 47.8 Q11 48.5 9.5 43 Q10 36 20 27 Z" fill="#fcfcff"/>
 </g>
 <path d="M23.3 20.5 l1 2.6 2.8 0.2 -2.2 1.8 0.8 2.7 -2.4 -1.5 -2.4 1.5 0.8 -2.7 -2.2 -1.8 2.8 -0.2 z" fill="#fcfcff" opacity="0.72"/>
</svg>
<div class="t" style="left:65.5px;top:16.5px;font-size:27px;font-weight:bold;color:#1a6eb6;-webkit-text-stroke:0.6px #1a6eb6;opacity:0.95">河东软件园</div>
<div class="t" style="left:66px;top:50px;font-family:'Liberation Serif',serif;font-size:17.5px;font-weight:bold;color:#1d781d;letter-spacing:1.55px;-webkit-text-stroke:0.3px #1d781d">www.pc0359.cn</div>

<div class="t" id="title" style="left:23px;top:1.5px;font-size:20.2px;color:#fff">视频分割软件V3.8</div>
<!-- left vertical label -->
<div class="t" style="left:12px;top:43px;font-size:14px;line-height:20px;white-space:normal;width:16px">视<br>频<br>预<br>览<br>区</div>

</body></html>
